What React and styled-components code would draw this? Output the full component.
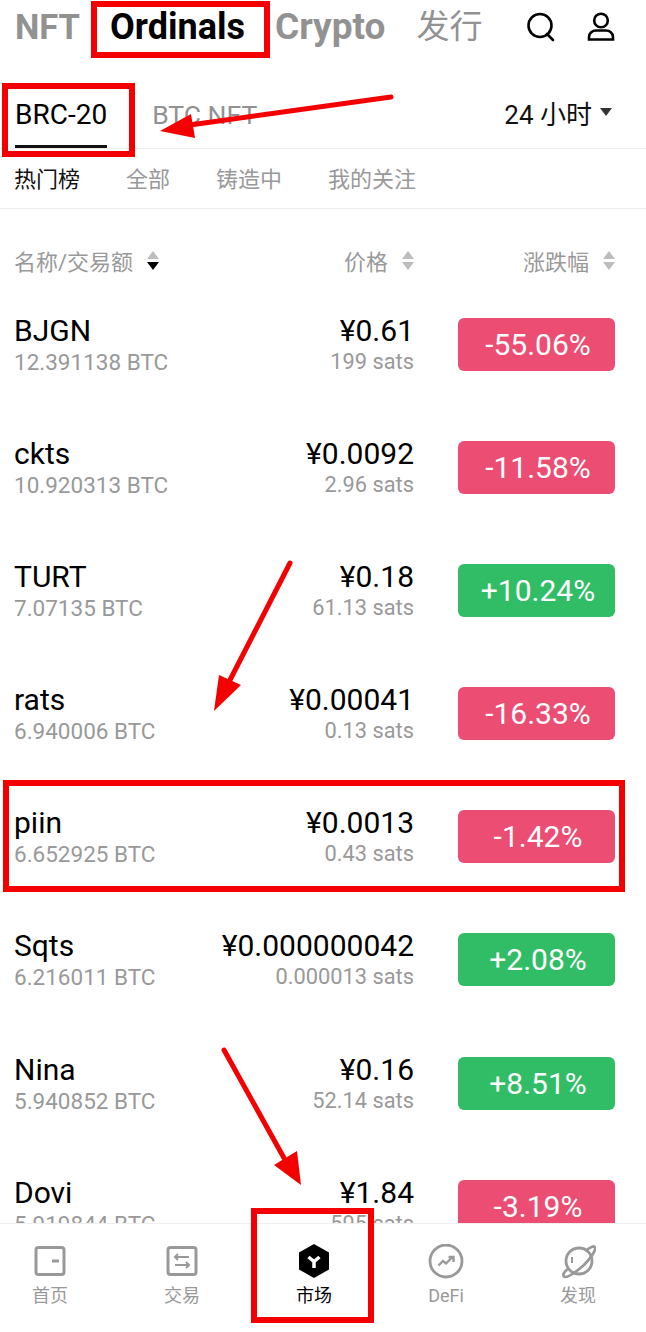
import React from 'react';
import styled, { createGlobalStyle } from 'styled-components';

const Global = createGlobalStyle`
  html, body { margin: 0; padding: 0; background: #fff; }
  body { font-family: Roboto, "Noto Sans CJK SC", sans-serif; }
`;
const Page = styled.div`
  position: relative; width: 646px; height: 1332px; overflow: hidden;
  display: flex; flex-direction: column; background: #fff;
`;
const Header = styled.header`
  height: 58px; flex: none; display: flex; align-items: center; padding: 0 31px 4px 15px; box-sizing: border-box;
`;
const TopTab = styled.span`
  font-size: ${p => p.$size}px; line-height: 40px; white-space: nowrap;
  color: ${p => (p.$active ? '#000' : '#929292')};
  margin-right: ${p => p.$gap}px;
  font-weight: ${p => (p.$cjk ? 400 : 700)};
`;
const HeaderIcons = styled.div`
  margin-left: auto; display: flex; align-items: center; gap: 31px;
`;
const SubBar = styled.div`
  height: 91px; flex: none; display: flex; box-sizing: border-box; padding: 25px 34px 0 15px;
  border-bottom: 1px solid #ededed;
`;
const SubTab = styled.div`
  height: 65px; box-sizing: border-box; font-size: ${p => (p.$active ? 28 : 26.5)}px; line-height: 64px; white-space: nowrap;
  color: ${p => (p.$active ? '#000' : '#929292')};
  border-bottom: ${p => (p.$active ? '3px solid #111' : '3px solid transparent')};
  margin-right: 45px;
`;
const Period = styled.div`
  margin-left: auto; display: flex; align-items: center; height: 58px; gap: 8px;
  font-size: 26px; color: #111; white-space: nowrap;
`;
const Caret = styled.i`
  display: block; width: 0; height: 0; border-left: 6px solid transparent; border-right: 6px solid transparent;
  border-top: 8px solid #333; margin-bottom: 1px;
`;
const Filters = styled.div`
  height: 60px; flex: none; display: flex; align-items: center; gap: 46px; padding: 0 14px 3px; box-sizing: border-box;
  border-bottom: 1px solid #ededed;
`;
const Filter = styled.span`
  font-size: 22px; color: ${p => (p.$active ? '#111' : '#999')}; white-space: nowrap;
  font-weight: 400;
`;
const TableHead = styled.div`
  height: 106px; flex: none; display: grid; grid-template-columns: 1fr 200px 201px; align-items: center;
  padding: 0 31px 4px 14px; box-sizing: border-box; color: #999; font-size: 22px;
`;
const HeadCell = styled.div`
  display: flex; align-items: center; gap: ${p => p.$gap || 14}px;
  justify-content: ${p => (p.$right ? 'flex-end' : 'flex-start')};
`;
const Sort = styled.span`
  display: flex; flex-direction: column; gap: 3px;
`;
const Up = styled.i`
  display: block; width: 0; height: 0; border-left: 6px solid transparent; border-right: 6px solid transparent;
  border-bottom: 8px solid #bdbdbd;
`;
const Down = styled.i`
  display: block; width: 0; height: 0; border-left: 6px solid transparent; border-right: 6px solid transparent;
  border-top: 8px solid ${p => (p.$on ? '#000' : '#bdbdbd')};
`;
const List = styled.div`
  flex: 1; overflow: hidden; min-height: 0; margin-top: -10px;
`;
const Row = styled.div`
  height: 123.1px; display: flex; align-items: flex-start; padding: 0 31px 0 14px; box-sizing: border-box;
`;
const Names = styled.div`
  flex: 1; display: flex; flex-direction: column; padding-top: 8px;
`;
const Name = styled.div`
  font-size: 30px; line-height: 35px; color: #000;
`;
const Sub = styled.div`
  font-size: ${p => (p.$sats ? 21.8 : 22.5)}px; line-height: 28px; color: #999; white-space: nowrap;
`;
const Prices = styled.div`
  display: flex; flex-direction: column; align-items: flex-end; padding-top: 8px; margin-right: 44px;
`;
const Pill = styled.div`
  width: 157px; height: 53px; margin-top: 13px; padding-left: 3px; box-sizing: border-box; border-radius: 6px; flex: none;
  display: flex; align-items: center; justify-content: center;
  background: ${p => (p.$up ? '#31bd65' : '#ec4d73')};
  color: #fff; font-size: 30px;
`;
const Nav = styled.nav`
  height: 109px; flex: none; display: grid; grid-template-columns: repeat(5, 132px); background: #fff;
  border-top: 1px solid #efefef; margin-left: -16px; box-sizing: border-box; position: relative;
`;
const NavItem = styled.div`
  display: flex; flex-direction: column; align-items: center; padding-top: 20px; box-sizing: border-box;
  color: ${p => (p.$active ? '#000' : '#999')}; font-size: 18px; line-height: 24px; gap: 4px;
`;
const NavIcon = styled.svg`
  width: 36px; height: 36px; display: block;
`;
const Mark = styled.div`
  position: absolute; box-sizing: border-box; border: 6px solid #f40000;
  left: ${p => p.$x}px; top: ${p => p.$y}px; width: ${p => p.$w}px; height: ${p => p.$h}px;
`;
const Overlay = styled.svg`
  position: absolute; left: 0; top: 0; width: 646px; height: 1332px; pointer-events: none;
`;

const rows = [
  ['BJGN', '12.391138 BTC', '¥0.61', '199 sats', '-55.06%', false],
  ['ckts', '10.920313 BTC', '¥0.0092', '2.96 sats', '-11.58%', false],
  ['TURT', '7.07135 BTC', '¥0.18', '61.13 sats', '+10.24%', true],
  ['rats', '6.940006 BTC', '¥0.00041', '0.13 sats', '-16.33%', false],
  ['piin', '6.652925 BTC', '¥0.0013', '0.43 sats', '-1.42%', false],
  ['Sqts', '6.216011 BTC', '¥0.000000042', '0.000013 sats', '+2.08%', true],
  ['Nina', '5.940852 BTC', '¥0.16', '52.14 sats', '+8.51%', true],
  ['Dovi', '5.919844 BTC', '¥1.84', '595 sats', '-3.19%', false],
];

const Arrow = ({ d, head }) => (
  <g>
    <path d={d} fill="none" stroke="#f40000" strokeWidth="5" strokeLinecap="round" />
    <polygon points={head} fill="#f40000" />
  </g>
);

export default function App() {
  return (
    <Page>
      <Global />
      <Header>
        <TopTab $size={34.5} $gap={30}>NFT</TopTab>
        <TopTab $size={36} $active $gap={30}>Ordinals</TopTab>
        <TopTab $size={37} $gap={31}>Crypto</TopTab>
        <TopTab $size={33} $cjk $gap={0}>发行</TopTab>
        <HeaderIcons>
          <svg width="30" height="30" viewBox="0 0 30 30" fill="none" stroke="#000" strokeWidth="2.6" strokeLinecap="round">
            <circle cx="14" cy="13.5" r="11.5" />
            <path d="M21 22l6 6" />
          </svg>
          <svg width="28" height="30" viewBox="0 0 28 30" fill="none" stroke="#000" strokeWidth="2.6">
            <circle cx="14" cy="8.5" r="6.8" />
            <path d="M2 27.5v-2.5c0-4 3.5-6.5 7-6.5h10c3.5 0 7 2.5 7 6.5v2.5z" />
          </svg>
        </HeaderIcons>
      </Header>
      <SubBar>
        <SubTab $active>BRC-20</SubTab>
        <SubTab>BTC NFT</SubTab>
        <Period>24 小时<Caret /></Period>
      </SubBar>
      <Filters>
        <Filter $active>热门榜</Filter>
        <Filter>全部</Filter>
        <Filter>铸造中</Filter>
        <Filter>我的关注</Filter>
      </Filters>
      <TableHead>
        <HeadCell>名称/交易额<Sort><Up /><Down $on /></Sort></HeadCell>
        <HeadCell $right>价格<Sort><Up /><Down /></Sort></HeadCell>
        <HeadCell $right>涨跌幅<Sort><Up /><Down /></Sort></HeadCell>
      </TableHead>
      <List>
        {rows.map(([n, v, p, s, c, up]) => (
          <Row key={n}>
            <Names><Name>{n}</Name><Sub>{v}</Sub></Names>
            <Prices><Name>{p}</Name><Sub $sats>{s}</Sub></Prices>
            <Pill $up={up}>{c}</Pill>
          </Row>
        ))}
      </List>
      <Nav>
        <NavItem>
          <NavIcon viewBox="0 0 36 36" fill="none" stroke="#999" strokeWidth="3">
            <rect x="4" y="3.5" width="28" height="27" rx="2.5" />
            <path d="M20 17h7" />
          </NavIcon>
          首页
        </NavItem>
        <NavItem>
          <NavIcon viewBox="0 0 36 36" fill="none" stroke="#999" strokeWidth="3">
            <rect x="4" y="3.5" width="28" height="27" rx="2.5" />
            <path d="M11 13h14M14 10l-3 3 3 3M25 21H11M22 18l3 3-3 3" strokeWidth="2" />
          </NavIcon>
          交易
        </NavItem>
        <NavItem $active>
          <NavIcon viewBox="0 0 36 36">
            <path d="M18 0l15 8.5v17l-15 8.5-15-8.5v-17z" fill="#000" />
            <path d="M12.5 13l5.5 4.5 5.5-4.5M18 17.5v6.5" fill="none" stroke="#fff" strokeWidth="3.5" />
          </NavIcon>
          市场
        </NavItem>
        <NavItem>
          <NavIcon viewBox="0 0 36 36" fill="none" stroke="#999" strokeWidth="2.8">
            <circle cx="18" cy="17" r="16" />
            <path d="M10.5 21.5l4.5-4.5 3 2.5 6-6M20.5 13h5v5" strokeWidth="2.4" />
          </NavIcon>
          DeFi
        </NavItem>
        <NavItem>
          <NavIcon viewBox="0 0 36 36" fill="none" stroke="#999" strokeWidth="2.8">
            <circle cx="19" cy="17" r="13" />
            <path d="M26 6.5C31 2.5 34.5 1.5 35 3.5 36 6.5 30 15 24 21 17 27 7 35 4 32.5 2.5 30.5 5 27 9 24" />
            <path d="M12 13v6" strokeWidth="2" />
          </NavIcon>
          发现
        </NavItem>
      </Nav>
      <Overlay viewBox="0 0 646 1332">
        <Arrow d="M391 97L190 125" head="160,131 191,114 195,138" />
        <Arrow d="M290 563L230 680" head="214,711 219,675 241,685" />
        <Arrow d="M224 1050L284 1158" head="301,1185 274,1165 297,1151" />
      </Overlay>
      <Mark $x={91} $y={1} $w={179} $h={57} />
      <Mark $x={2} $y={83} $w={133} $h={74} />
      <Mark $x={3} $y={780} $w={622} $h={112} />
      <Mark $x={251} $y={1208} $w={123} $h={115} />
    </Page>
  );
}
